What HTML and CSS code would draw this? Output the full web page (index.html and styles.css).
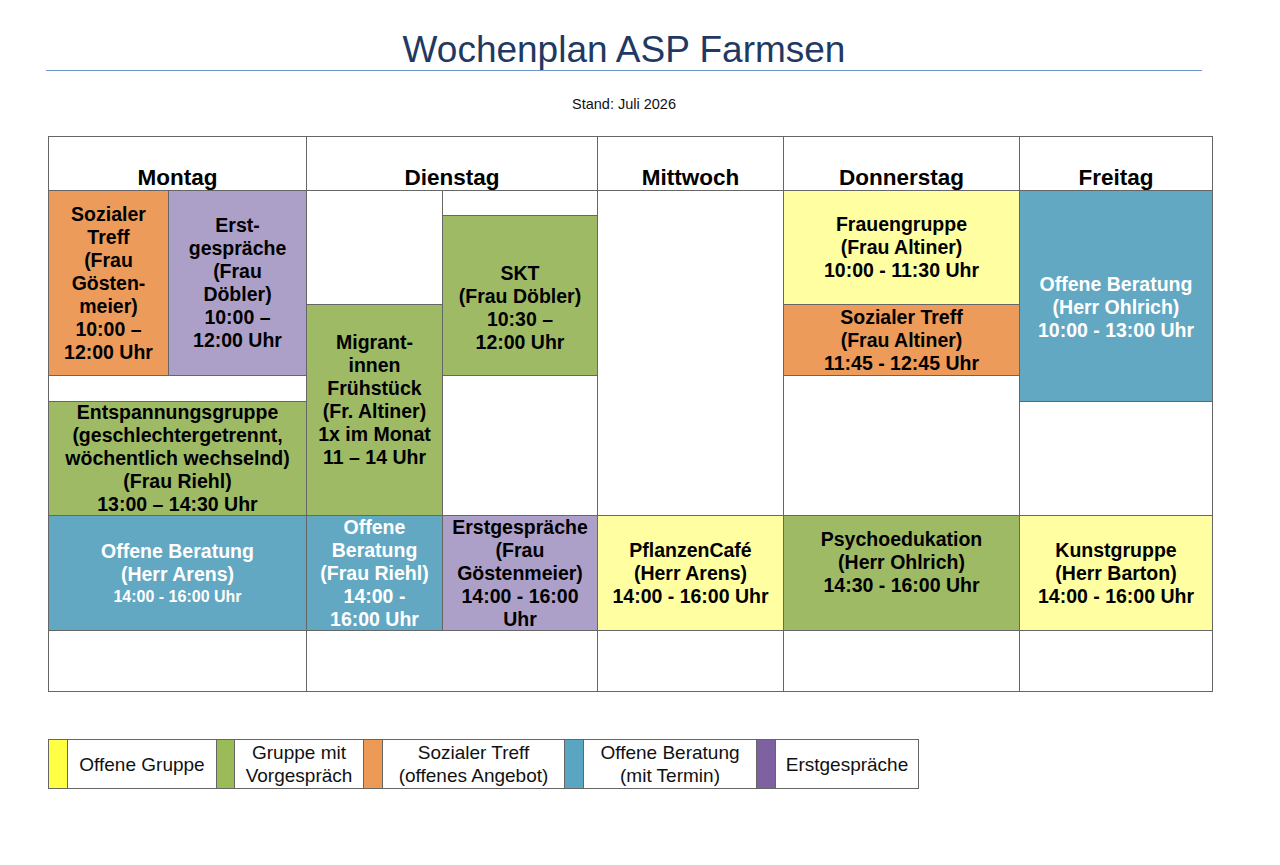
FILE: index.html
```html
<!DOCTYPE html>
<html lang="de">
<head>
<meta charset="utf-8">
<title>Wochenplan ASP Farmsen</title>
<link rel="stylesheet" href="styles.css">
</head>
<body>
<div class="sheet">
  <header class="head">
    <h1 class="title">Wochenplan ASP Farmsen</h1>
  </header>
  <p class="stand">Stand: Juli 2026</p>

  <div class="plan">
    <div class="day h-mo">Montag</div>
    <div class="day h-di">Dienstag</div>
    <div class="day h-mi">Mittwoch</div>
    <div class="day h-do">Donnerstag</div>
    <div class="day h-fr">Freitag</div>

    <div class="cell orange mo-soz">Sozialer<br>Treff<br>(Frau<br>Gösten-<br>meier)<br>10:00 –<br>12:00 Uhr</div>
    <div class="cell purple mo-erst">Erst-<br>gespräche<br>(Frau<br>Döbler)<br>10:00 –<br>12:00 Uhr</div>
    <div class="cell mo-gap"></div>
    <div class="cell green mo-ent">Entspannungsgruppe<br>(geschlechtergetrennt,<br>wöchentlich wechselnd)<br>(Frau Riehl)<br>13:00 – 14:30 Uhr</div>
    <div class="cell blue mo-ob">Offene Beratung<br>(Herr Arens)<span class="small">14:00 - 16:00 Uhr</span></div>
    <div class="cell mo-end"></div>

    <div class="cell di-w1"></div>
    <div class="cell green di-mig">Migrant-<br>innen<br>Frühstück<br>(Fr. Altiner)<br>1x im Monat<br>11 – 14 Uhr</div>
    <div class="cell blue di-ob">Offene<br>Beratung<br>(Frau Riehl)<br>14:00 -<br>16:00 Uhr</div>
    <div class="cell di-w2"></div>
    <div class="cell green di-skt">SKT<br>(Frau Döbler)<br>10:30 –<br>12:00 Uhr</div>
    <div class="cell di-w3"></div>
    <div class="cell purple di-erst">Erstgespräche<br>(Frau<br>Göstenmeier)<br>14:00 - 16:00<br>Uhr</div>
    <div class="cell di-end"></div>

    <div class="cell mi-w"></div>
    <div class="cell yellow mi-pf">PflanzenCafé<br>(Herr Arens)<br>14:00 - 16:00 Uhr</div>
    <div class="cell mi-end"></div>

    <div class="cell yellow do-frau">Frauengruppe<br>(Frau Altiner)<br>10:00 - 11:30 Uhr</div>
    <div class="cell orange do-soz">Sozialer Treff<br>(Frau Altiner)<br>11:45 - 12:45 Uhr</div>
    <div class="cell do-w"></div>
    <div class="cell green do-psy">Psychoedukation<br>(Herr Ohlrich)<br>14:30 - 16:00 Uhr</div>
    <div class="cell do-end"></div>

    <div class="cell blue fr-ob">Offene Beratung<br>(Herr Ohlrich)<br>10:00 - 13:00 Uhr</div>
    <div class="cell fr-w"></div>
    <div class="cell yellow fr-kunst">Kunstgruppe<br>(Herr Barton)<br>14:00 - 16:00 Uhr</div>
    <div class="cell fr-end"></div>
  </div>

  <div class="legend">
    <div class="sw sw-yellow"></div>
    <div class="lt">Offene Gruppe</div>
    <div class="sw sw-green"></div>
    <div class="lt">Gruppe mit<br>Vorgespräch</div>
    <div class="sw sw-orange"></div>
    <div class="lt">Sozialer Treff<br>(offenes Angebot)</div>
    <div class="sw sw-blue"></div>
    <div class="lt">Offene Beratung<br>(mit Termin)</div>
    <div class="sw sw-purple"></div>
    <div class="lt">Erstgespräche</div>
  </div>
</div>
</body>
</html>
```

FILE: styles.css
```css
* { box-sizing: border-box; }

html, body {
  margin: 0;
  padding: 0;
  background: #ffffff;
}

body {
  font-family: "Liberation Sans", Arial, sans-serif;
  color: #000;
}

.sheet {
  padding: 30px 0 0 46px;
}

.head {
  width: 1156px;
  border-bottom: 1px solid #7395cf;
}

.title {
  margin: 0;
  font-size: 37px;
  line-height: 40px;
  font-weight: normal;
  color: #1f3962;
  text-align: center;
}

.stand {
  width: 1156px;
  margin: 25px 0 0 0;
  font-size: 14.5px;
  line-height: 17px;
  text-align: center;
  color: #111;
}

.plan {
  margin: 23px 0 0 2px;
  width: 1165px;
  display: grid;
  grid-template-columns: 119px 137px 135px 154px 185px 235px 192px;
  grid-template-rows: 53px 24px 88px 70px 25px 113px 114px 60px;
  gap: 1px;
  background: #666666;
  border: 1px solid #666666;
}

.day {
  background: #fff;
  display: flex;
  align-items: flex-end;
  justify-content: center;
  font-weight: bold;
  font-size: 22.5px;
  line-height: 24px;
  grid-row: 1 / 2;
}

.h-mo { grid-column: 1 / 3; }
.h-di { grid-column: 3 / 5; }
.h-mi { grid-column: 5 / 6; }
.h-do { grid-column: 6 / 7; }
.h-fr { grid-column: 7 / 8; }

.cell {
  background: #fff;
  display: flex;
  flex-direction: column;
  justify-content: center;
  align-items: center;
  text-align: center;
  font-weight: bold;
  font-size: 19.5px;
  line-height: 23px;
  white-space: nowrap;
  overflow: hidden;
}

.orange { background: #ec9b5a; }
.purple { background: #ada0c8; }
.green  { background: #9fba64; }
.blue   { background: #63a8c3; color: #fff; }
.yellow { background: #ffffa2; }

.small {
  display: block;
  font-size: 16px;
  line-height: 21px;
}

/* Montag */
.mo-soz  { grid-column: 1 / 2; grid-row: 2 / 5; }
.mo-erst { grid-column: 2 / 3; grid-row: 2 / 5; }
.mo-gap  { grid-column: 1 / 3; grid-row: 5 / 6; }
.mo-ent  { grid-column: 1 / 3; grid-row: 6 / 7; }
.mo-ob   { grid-column: 1 / 3; grid-row: 7 / 8; }
.mo-end  { grid-column: 1 / 3; grid-row: 8 / 9; }

/* Dienstag */
.di-w1   { grid-column: 3 / 4; grid-row: 2 / 4; }
.di-mig  { grid-column: 3 / 4; grid-row: 4 / 7; padding-bottom: 20px; }
.di-ob   { grid-column: 3 / 4; grid-row: 7 / 8; }
.di-w2   { grid-column: 4 / 5; grid-row: 2 / 3; }
.di-skt  { grid-column: 4 / 5; grid-row: 3 / 5; padding-top: 24px; }
.di-w3   { grid-column: 4 / 5; grid-row: 5 / 7; }
.di-erst { grid-column: 4 / 5; grid-row: 7 / 8; }
.di-end  { grid-column: 3 / 5; grid-row: 8 / 9; }

/* Mittwoch */
.mi-w    { grid-column: 5 / 6; grid-row: 2 / 7; }
.mi-pf   { grid-column: 5 / 6; grid-row: 7 / 8; }
.mi-end  { grid-column: 5 / 6; grid-row: 8 / 9; }

/* Donnerstag */
.do-frau { grid-column: 6 / 7; grid-row: 2 / 4; }
.do-soz  { grid-column: 6 / 7; grid-row: 4 / 5; }
.do-w    { grid-column: 6 / 7; grid-row: 5 / 7; }
.do-psy  { grid-column: 6 / 7; grid-row: 7 / 8; padding-bottom: 22px; }
.do-end  { grid-column: 6 / 7; grid-row: 8 / 9; }

/* Freitag */
.fr-ob    { grid-column: 7 / 8; grid-row: 2 / 6; padding-top: 23px; }
.fr-w     { grid-column: 7 / 8; grid-row: 6 / 7; }
.fr-kunst { grid-column: 7 / 8; grid-row: 7 / 8; }
.fr-end   { grid-column: 7 / 8; grid-row: 8 / 9; }

/* Legend */
.legend {
  margin: 47px 0 0 2px;
  display: inline-grid;
  grid-template-columns: 18px 148px 17px 128px 18px 181px 18px 172px 18px 142px;
  grid-template-rows: 48px;
  gap: 1px;
  background: #666666;
  border: 1px solid #666666;
}

.sw { background: #fff; }
.sw-yellow { background: #ffff44; }
.sw-green  { background: #9bbb59; }
.sw-orange { background: #ec9a55; }
.sw-blue   { background: #5aa6c2; }
.sw-purple { background: #7e61a1; }

.lt {
  background: #fff;
  display: flex;
  align-items: center;
  justify-content: center;
  text-align: center;
  font-size: 19px;
  line-height: 23px;
  color: #111;
  white-space: nowrap;
}
```
